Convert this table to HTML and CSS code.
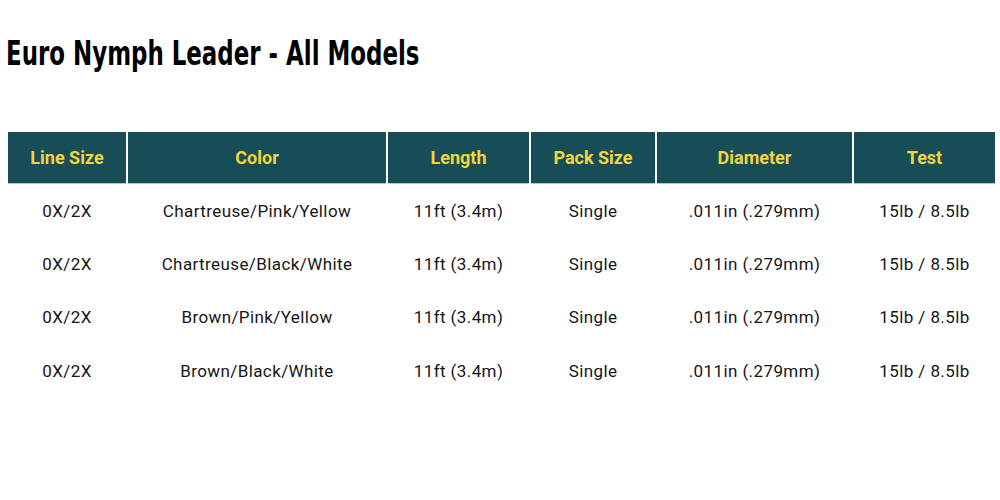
FILE: index.html
```html
<!DOCTYPE html>
<html>
<head>
<meta charset="utf-8">
<link rel="stylesheet" href="styles.css">
</head>
<body>
<h1 class="title">Euro Nymph Leader - All Models</h1>
<table class="specs">
  <colgroup>
    <col class="c1"><col class="c2"><col class="c3"><col class="c4"><col class="c5"><col class="c6">
  </colgroup>
  <thead>
    <tr><th>Line Size</th><th>Color</th><th>Length</th><th>Pack Size</th><th>Diameter</th><th>Test</th></tr>
  </thead>
  <tbody>
    <tr><td>0X/2X</td><td>Chartreuse/Pink/Yellow</td><td>11ft (3.4m)</td><td>Single</td><td>.011in (.279mm)</td><td>15lb / 8.5lb</td></tr>
    <tr><td>0X/2X</td><td>Chartreuse/Black/White</td><td>11ft (3.4m)</td><td>Single</td><td>.011in (.279mm)</td><td>15lb / 8.5lb</td></tr>
    <tr><td>0X/2X</td><td>Brown/Pink/Yellow</td><td>11ft (3.4m)</td><td>Single</td><td>.011in (.279mm)</td><td>15lb / 8.5lb</td></tr>
    <tr><td>0X/2X</td><td>Brown/Black/White</td><td>11ft (3.4m)</td><td>Single</td><td>.011in (.279mm)</td><td>15lb / 8.5lb</td></tr>
  </tbody>
</table>
</body>
</html>
```
FILE: styles.css
```css
body {
  margin: 0;
  padding: 0 5px 0 6px;
  background: #fff;
  font-family: Roboto, "Liberation Sans", sans-serif;
  color: #111;
}
.title {
  margin: 34px 0 0 0;
  font-family: "DejaVu Sans Condensed", "DejaVu Sans", sans-serif;
  font-stretch: condensed;
  font-weight: bold;
  font-size: 33px;
  line-height: 40px;
  color: #000;
  transform: scaleX(0.772);
  transform-origin: 0 50%;
  white-space: nowrap;
}
.specs {
  margin-top: 58px;
  width: 990px;
  border-collapse: separate;
  border-spacing: 2px 0;
  table-layout: fixed;
}
.c1 { width: 118px; }
.c2 { width: 258px; }
.c3 { width: 141px; }
.c4 { width: 124px; }
.c5 { width: 195px; }
.c6 { width: 141px; }
.specs th {
  background: #174d57;
  color: #f2d43c;
  font-weight: bold;
  font-size: 18px;
  height: 51px;
  padding: 0;
  border-bottom: 1px solid #b8c6c9;
  text-align: center;
}
.specs td {
  height: 53.4px;
  padding: 0;
  text-align: center;
  font-size: 17px;
  letter-spacing: 0.4px;
  color: #161616;
}
```
